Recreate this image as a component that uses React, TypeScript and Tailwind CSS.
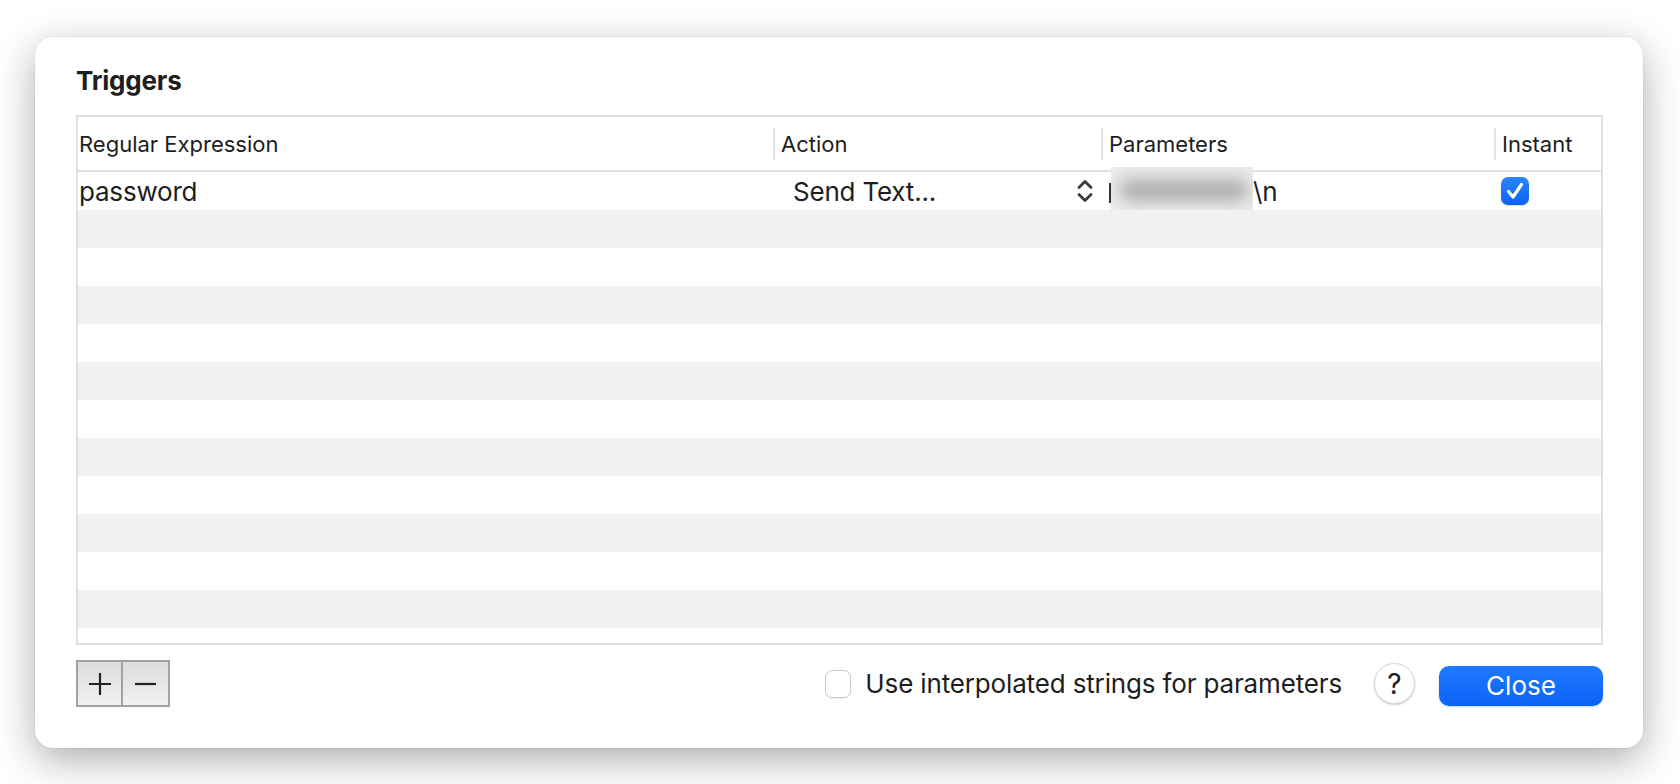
import { ReactNode } from 'react'

const FONT = { fontFamily: 'Inter, "Liberation Sans", sans-serif' }

// header cell with the thin column separator on its left
function HeaderCell({ width, children, first = false }: { width: string; children: ReactNode; first?: boolean }) {
  return (
    <div className={`flex h-full items-center ${width}`}>
      {!first && <div className="h-[32px] w-[2px] shrink-0 bg-[#e2e2e2]" />}
      <span className={first ? 'pl-[1px]' : 'pl-[6px]'}>{children}</span>
    </div>
  )
}

function UpDownChevron() {
  return (
    <svg width="16" height="26" viewBox="0 0 16 26" fill="none" stroke="#3a3a3a" strokeWidth="2.8" strokeLinecap="round" strokeLinejoin="round">
      <path d="M2 9.5 L8 3.5 L14 9.5" />
      <path d="M2 16.5 L8 22.5 L14 16.5" />
    </svg>
  )
}

function CheckedBox() {
  return (
    <div className="flex h-[28px] w-[28px] items-center justify-center rounded-[7px] bg-gradient-to-b from-[#2a86ff] to-[#0a62f5] shadow-[0_1px_1px_rgba(0,0,0,0.15)]">
      <svg width="22" height="22" viewBox="0 0 22 22" fill="none" stroke="white" strokeWidth="3.2" strokeLinecap="round" strokeLinejoin="round">
        <path d="M4.5 11.5 L9 17 L17.5 4.5" />
      </svg>
    </div>
  )
}

export default function App() {
  const rows = Array.from({ length: 13 }, (_, i) => i)

  return (
    <div className="h-[784px] w-[1680px] overflow-hidden bg-white pl-[35px] pt-[37px] text-[#1e1e1e]" style={FONT}>
      <div className="flex h-[711px] w-[1608px] flex-col rounded-[18px] bg-white pl-[41px] pr-[40px] pt-[29px] shadow-[0_12px_40px_rgba(0,0,0,0.32),0_0_0_1px_rgba(0,0,0,0.04)]">
        <h1 className="text-[26px] font-bold leading-[30px] tracking-[-0.2px]">Triggers</h1>

        {/* table */}
        <div className="mt-[19px] flex h-[530px] flex-col overflow-hidden border-2 border-[#e0e0e0]">
          <div className="flex h-[55px] shrink-0 border-b-2 border-[#e0e0e0] text-[22px] leading-[26px]">
            <HeaderCell width="w-[695px]" first>Regular Expression</HeaderCell>
            <HeaderCell width="w-[328px]">Action</HeaderCell>
            <HeaderCell width="w-[393px]">Parameters</HeaderCell>
            <HeaderCell width="flex-1">Instant</HeaderCell>
          </div>

          <div className="flex flex-col">
            {rows.map((i) => (
              <div key={i} className={`flex h-[38px] shrink-0 ${i % 2 === 1 ? 'bg-[#f0f1f1]' : 'bg-white'}`}>
                {i === 0 && (
                  <>
                    <div className="w-[695px] pl-[1px] pt-[5px] text-[26px] leading-[30px] tracking-[-0.2px]">password</div>
                    <div className="flex w-[328px] items-center pl-[20px] pr-[8px]">
                      <span className="pt-[1px] text-[26px] leading-[30px] tracking-[-0.2px]">Send Text...</span>
                      <span className="ml-auto"><UpDownChevron /></span>
                    </div>
                    <div className="flex w-[393px] items-start pl-[8px]">
                      <span className="mt-[11px] h-[20px] w-[2px] bg-[#333]" />
                      <div className="relative -mt-[5px] h-[43px] w-[142px] overflow-hidden bg-[#ececec]">
                        <div className="absolute left-[8px] right-[4px] top-[12px] h-[22px] rounded-full bg-[#adadad] blur-[8px]" />
                      </div>
                      <span className="pt-[5px] text-[26px] leading-[30px]">\n</span>
                    </div>
                    <div className="flex flex-1 items-center pl-[7px]">
                      <CheckedBox />
                    </div>
                  </>
                )}
              </div>
            ))}
          </div>
        </div>

        {/* footer */}
        <div className="mt-[15px] flex h-[47px] items-center">
          <div className="flex h-[47px] border-2 border-[#a2a2a2] bg-gradient-to-b from-[#dcdcdc] to-[#f1f1f1]">
            <button className="flex w-[45px] items-center justify-center border-r-2 border-[#a2a2a2]">
              <svg width="22" height="22" viewBox="0 0 22 22" stroke="#222" strokeWidth="2.2">
                <path d="M11 0 V22 M0 11 H22" />
              </svg>
            </button>
            <button className="flex w-[45px] items-center justify-center">
              <svg width="22" height="22" viewBox="0 0 22 22" stroke="#222" strokeWidth="2.2">
                <path d="M0 11 H21" />
              </svg>
            </button>
          </div>

          <label className="ml-auto flex items-center">
            <span className="h-[28px] w-[26px] rounded-[7px] border border-[#c9c9c9] bg-white shadow-[0_1px_1px_rgba(0,0,0,0.06)]" />
            <span className="ml-[14px] text-[26px] leading-[30px] tracking-[-0.15px]">Use interpolated strings for parameters</span>
          </label>

          <button className="ml-[32px] flex h-[41px] w-[41px] items-center justify-center rounded-full border border-[#d6d6d6] bg-white text-[28px] font-normal leading-none text-[#222] shadow-[0_1px_2px_rgba(0,0,0,0.2)]">
            ?
          </button>

          <button className="ml-[24px] mt-[5px] h-[40px] w-[164px] rounded-[10px] bg-gradient-to-b from-[#1e79ff] to-[#0b63f6] text-[26px] leading-[30px] text-white shadow-[0_1px_2px_rgba(0,80,255,0.25)]">
            Close
          </button>
        </div>
      </div>
    </div>
  )
}
